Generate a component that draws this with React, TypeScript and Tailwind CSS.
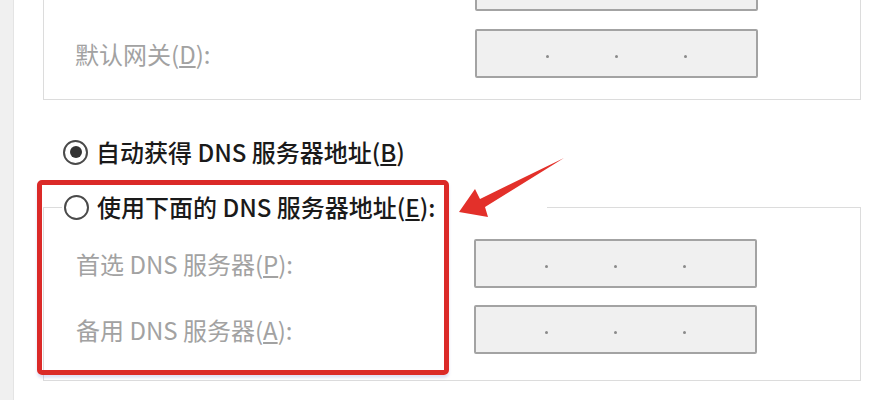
import React from 'react';

const font = "font-['Noto_Sans_CJK_SC','Noto_Sans',sans-serif]";

function IpInput() {
  return (
    <div className="w-[283px] h-[49px] shrink-0 bg-[#f0f0f0] border-2 border-[#a3a3a3] rounded-[2px] flex items-center justify-center gap-[66px] pt-[6px]">
      <span className="w-[3px] h-[3px] rounded-full bg-[#8a8a8a]" />
      <span className="w-[3px] h-[3px] rounded-full bg-[#8a8a8a]" />
      <span className="w-[3px] h-[3px] rounded-full bg-[#8a8a8a]" />
    </div>
  );
}

function Row({ label, keyChar, inset }: { label?: string; keyChar?: string; inset: 'top' | 'dns' }) {
  return (
    <div className="flex items-center">
      <div
        className={`text-[24px] leading-[30px] text-[#a2a2a2] whitespace-nowrap ${inset === 'top' ? 'pl-[31px] w-[431px]' : 'pl-[32px] w-[430px]'}`}
      >
        {label && (
          <>
            {label}(<span className="underline underline-offset-2">{keyChar}</span>):
          </>
        )}
      </div>
      <IpInput />
    </div>
  );
}

function Radio({ checked }: { checked?: boolean }) {
  return (
    <span className="w-[25px] h-[25px] shrink-0 rounded-full border-2 border-[#4a4a4a] bg-white flex items-center justify-center">
      {checked && <span className="w-[12px] h-[12px] rounded-full bg-[#333]" />}
    </span>
  );
}

export default function App() {
  return (
    <div className={`relative w-[888px] h-[400px] overflow-hidden bg-white flex ${font}`}>
      {/* dialog edge */}
      <div className="w-[14px] shrink-0 bg-[#f0f0f0] border-r border-[#e4e4e4]" />

      <div className="flex-1 pl-[29px] flex flex-col">
        {/* IP group, cut off at the top */}
        <div className="w-[818px] mt-[-60px] pt-[22px] pb-[21px] border border-t-0 border-[#dcdcdc] flex flex-col gap-[18px]">
          <Row inset="top" />
          <Row label="默认网关" keyChar="D" inset="top" />
        </div>

        <label className="mt-[37px] ml-[20px] flex items-center gap-[8px] text-[24px] leading-[30px] font-medium text-[#1a1a1a] whitespace-nowrap">
          <Radio checked />
          <span>
            自动获得 DNS 服务器地址(<span className="underline underline-offset-2">B</span>)
          </span>
        </label>

        <fieldset className="w-[818px] mt-[25px] border border-[#dcdcdc] px-0 pb-[26px]">
          <legend className="ml-[18px] pl-[2px] pr-[112px] flex items-center gap-[8px] text-[24px] leading-[30px] font-medium text-[#1a1a1a] whitespace-nowrap">
            <Radio />
            <span>
              使用下面的 DNS 服务器地址(<span className="underline underline-offset-2">E</span>):
            </span>
          </legend>
          <div className="pt-[17px] flex flex-col gap-[17px]">
            <Row label="首选 DNS 服务器" keyChar="P" inset="dns" />
            <Row label="备用 DNS 服务器" keyChar="A" inset="dns" />
          </div>
        </fieldset>
      </div>

      {/* annotation: red frame */}
      <div className="absolute left-[37px] top-[180px] w-[412px] h-[195px] border-[5px] border-[#db2a28] rounded-[5px] shadow-[0_3px_3px_rgba(130,130,210,0.25)]" />

      {/* annotation: arrow */}
      <svg className="absolute inset-0 pointer-events-none" width="888" height="400" viewBox="0 0 888 400">
        <polygon points="459,212 475,189 480,199 564,158 485,207 488,217" fill="#e3302a" />
      </svg>
    </div>
  );
}
